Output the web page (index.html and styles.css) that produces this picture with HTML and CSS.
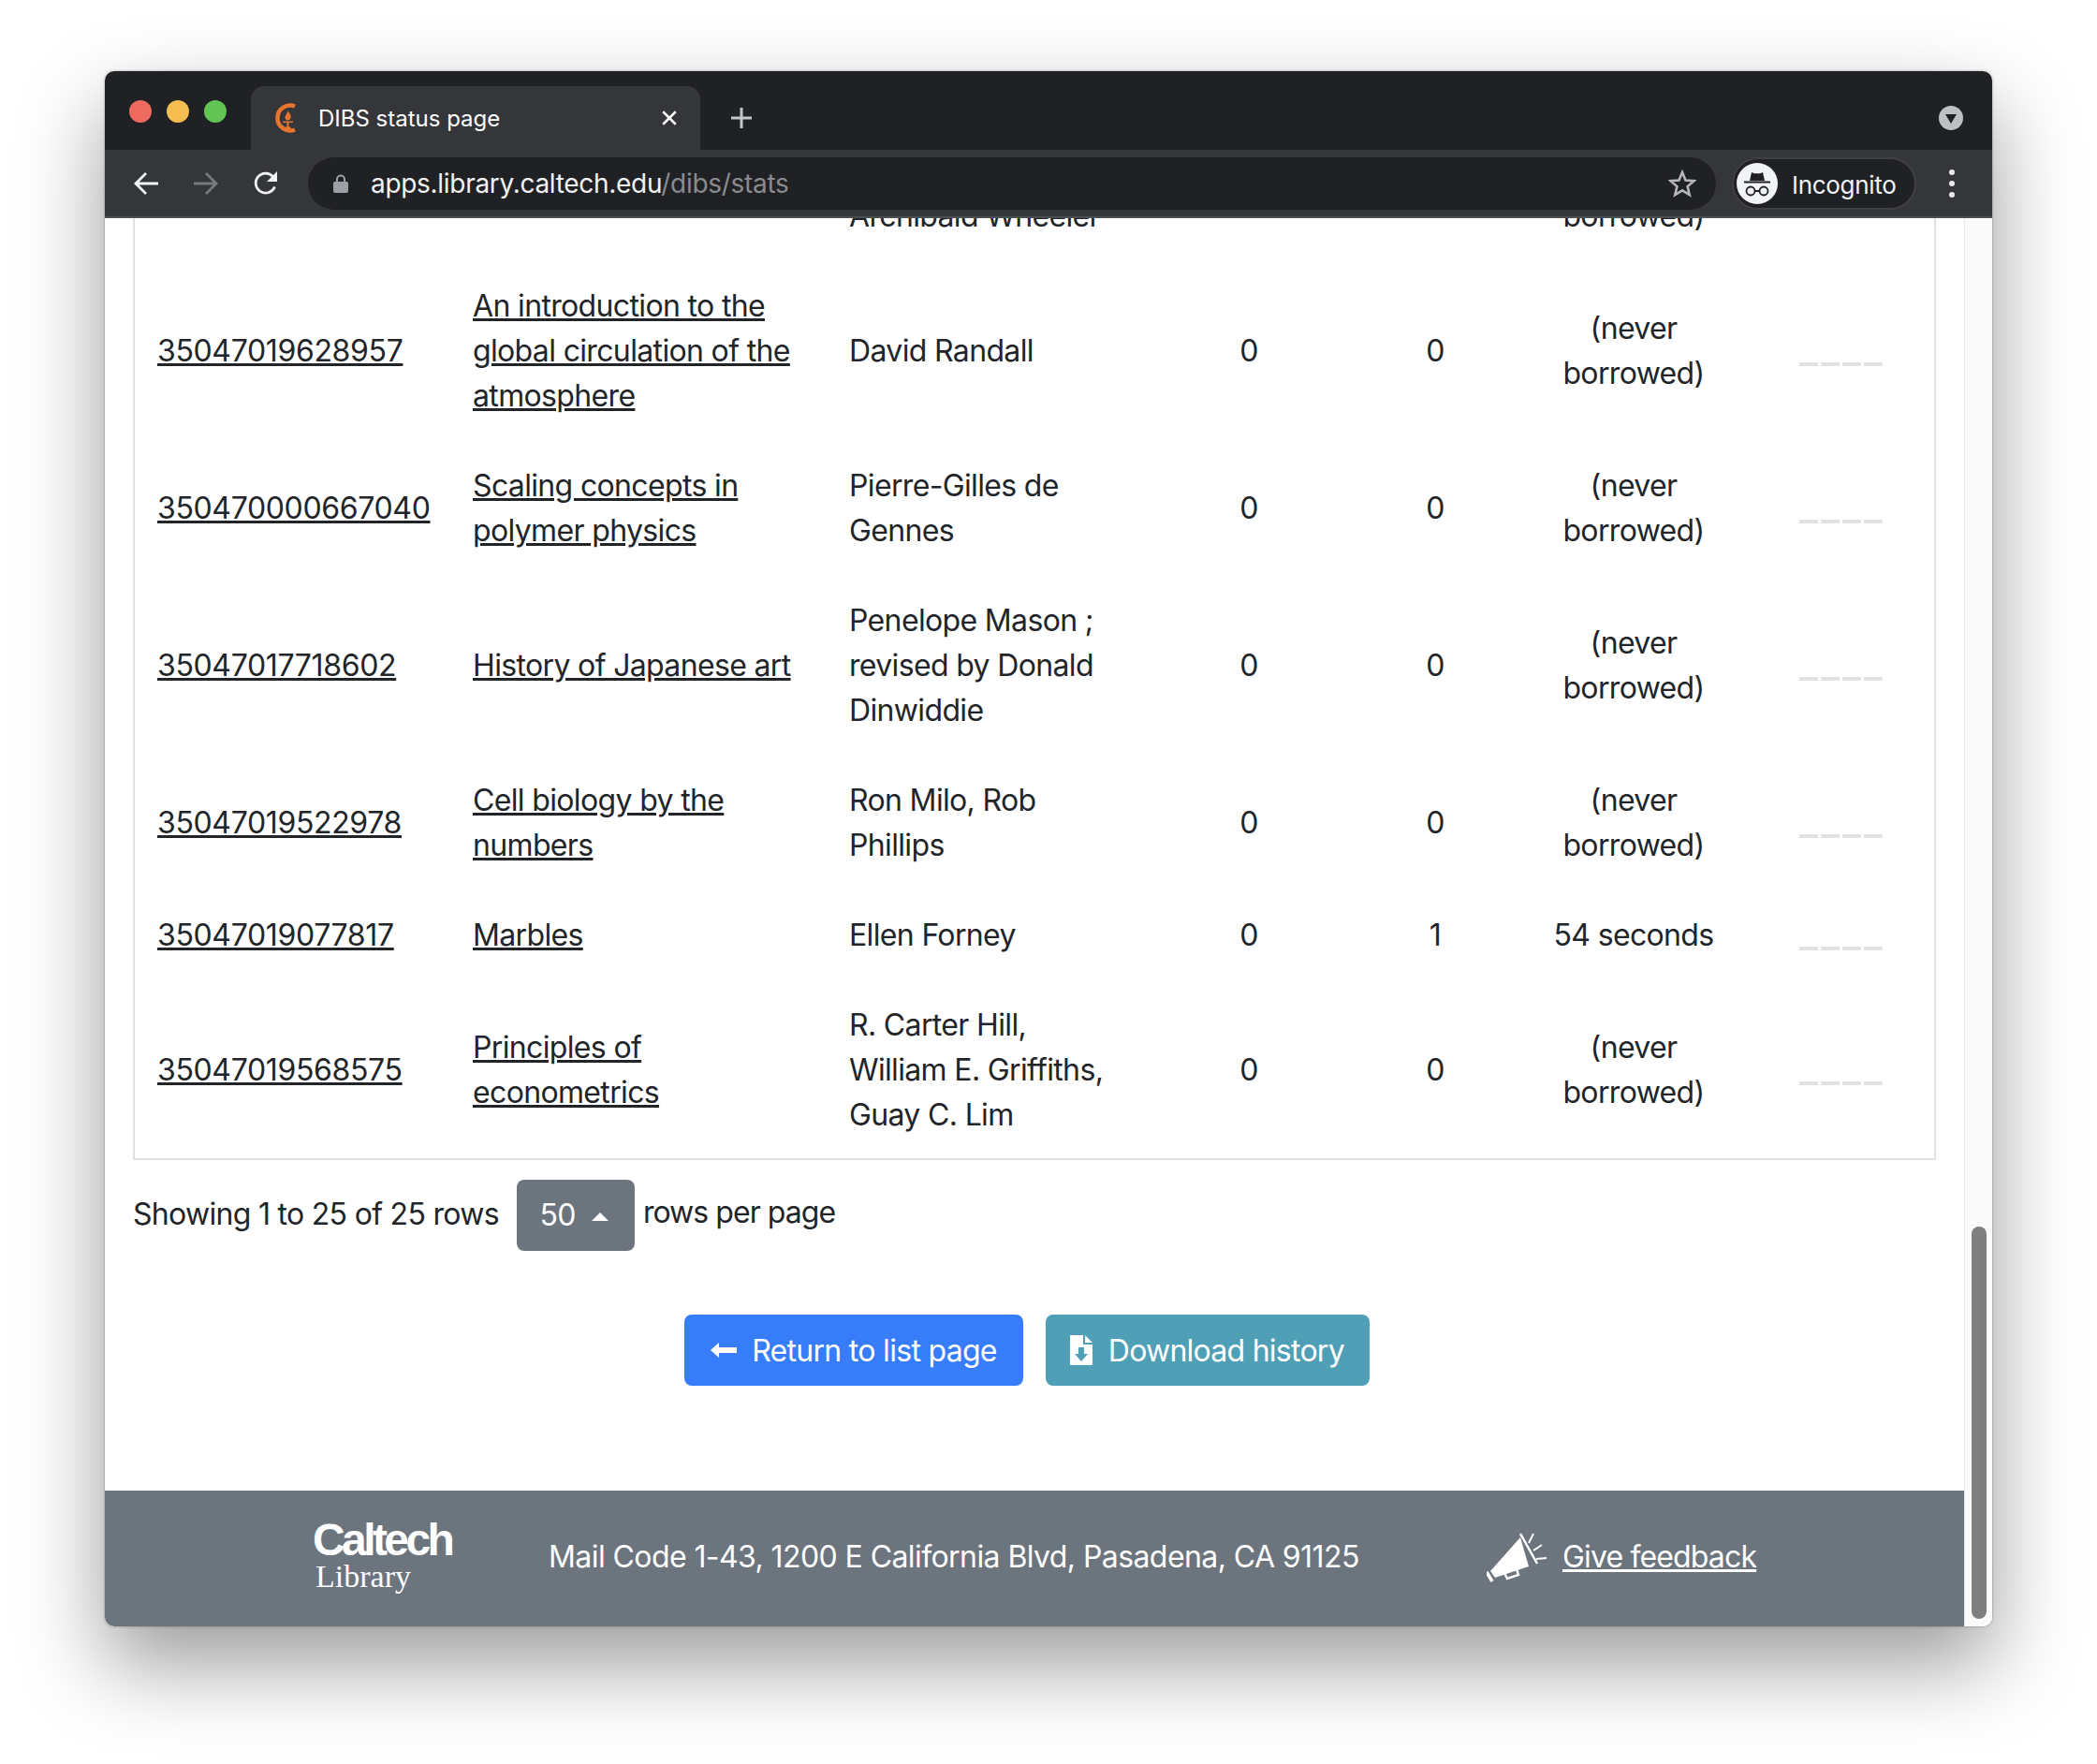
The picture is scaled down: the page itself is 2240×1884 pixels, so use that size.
FILE: index.html
```html
<!DOCTYPE html>
<html lang="en">
<head>
    <meta charset="UTF-8">
    <meta name="viewport" content="width=device-width, initial-scale=1.0">
    <title>DIBS status page</title>
    <link rel="stylesheet" href="styles.css">
</head>
<body>

<div class="window">

    <!-- browser chrome -->
    <div class="tabbar">
        <div class="lights">
            <span class="light red"></span>
            <span class="light yellow"></span>
            <span class="light green"></span>
        </div>
        <div class="tab">
            <svg class="favicon" viewBox="0 0 24 32">
                <path d="M23 3.500A13.500 13.500 0 1 0 23 28.500" fill="none" stroke="#e8752f" stroke-width="4.500"/>
                <path d="M15.500 8c1 3 4 4 3 8-.5 1.500-1.500 2.500-3 2.500s-3-1.200-3-3c0-2 2-3 3-7.500z" fill="#e8752f"/>
                <path d="M10 19.500h11v1.500h-4.500v4.500h2v1.500h-6v-1.500h2V21H10z" fill="#e8752f"/>
            </svg>
            <span class="tab-title">DIBS status page</span>
            <svg class="tab-close" viewBox="0 0 16 16"><path d="M2 2l12 12M14 2L2 14" stroke="#fff" stroke-width="2.200"/></svg>
        </div>
        <svg class="new-tab" viewBox="0 0 24 24"><path d="M12 1v22M1 12h22" stroke="#c4c7c9" stroke-width="3"/></svg>
        <svg class="tab-menu" viewBox="0 0 26 26">
            <circle cx="13" cy="13" r="13" fill="#bdc1c6"/>
            <path d="M7 9h12l-6 10z" fill="#202124"/>
        </svg>
    </div>

    <div class="toolbar">
        <div class="nav">
            <svg class="nav-icon" viewBox="0 0 28 28"><path d="M27 14H3M14 3L3 14l11 11" fill="none" stroke="#f1f3f4" stroke-width="2.800"/></svg>
            <svg class="nav-icon" viewBox="0 0 28 28"><path d="M1 14h24M14 3l11 11-11 11" fill="none" stroke="#77797c" stroke-width="2.800"/></svg>
            <svg class="nav-icon" viewBox="0 0 28 28">
                <path d="M23.500 17.500A10.500 10.500 0 1 1 21.500 6.500" fill="none" stroke="#f1f3f4" stroke-width="2.800"/>
                <path d="M26 1v11H15z" fill="#f1f3f4"/>
            </svg>
        </div>
        <div class="omnibox">
            <svg class="lock" viewBox="0 0 16 20">
                <path d="M4 8V5.500a4 4 0 0 1 8 0V8" fill="none" stroke="#9aa0a6" stroke-width="2"/>
                <rect y="8" width="16" height="12" rx="2" fill="#9aa0a6"/>
            </svg>
            <span class="url">apps.library.caltech.edu<span class="url-path">/dibs/stats</span></span>
            <svg class="star" viewBox="0 0 30 30"><path d="M15 3l3.500 8.500 9 .7-6.900 5.900 2.100 8.900-7.700-4.700-7.700 4.700 2.100-8.900-6.900-5.900 9-.7z" fill="none" stroke="#b5b7b9" stroke-width="2.600"/></svg>
        </div>
        <div class="profile">
            <svg class="profile-icon" viewBox="0 0 44 44">
                <circle cx="22" cy="22" r="22" fill="#f1f3f4"/>
                <path d="M14 19l2-9 3 1.200h6l3-1.200 2 9z" fill="#202124"/>
                <path d="M8 20.500h28" stroke="#202124" stroke-width="2"/>
                <circle cx="15" cy="30" r="4.500" fill="none" stroke="#202124" stroke-width="1.800"/>
                <circle cx="29" cy="30" r="4.500" fill="none" stroke="#202124" stroke-width="1.800"/>
                <path d="M19.500 30h5" stroke="#202124" stroke-width="1.800"/>
            </svg>
            <span class="profile-name">Incognito</span>
        </div>
        <div class="kebab"><span></span><span></span><span></span></div>
    </div>

    <!-- page, scrolled to the bottom -->
    <div class="viewport">
        <div class="page">
            <div class="content">
                <table class="stats">
                    <colgroup>
                        <col class="col-barcode">
                        <col class="col-title">
                        <col class="col-author">
                        <col class="col-count">
                        <col class="col-loans">
                        <col class="col-duration">
                        <col>
                    </colgroup>
                    <tbody>
                        <tr>
                            <td></td>
                            <td></td>
                            <td>Archibald Wheeler</td>
                            <td class="num"></td>
                            <td class="num"></td>
                            <td class="num">borrowed)</td>
                            <td class="spark-cell"></td>
                        </tr>
                        <tr>
                            <td><a class="barcode" href="#">35047019628957</a></td>
                            <td><a href="#">An introduction to the global circulation of the atmosphere</a></td>
                            <td>David Randall</td>
                            <td class="num">0</td>
                            <td class="num">0</td>
                            <td class="num">(never borrowed)</td>
                            <td class="spark-cell"><div class="spark"><i></i><i></i><i></i><i></i></div></td>
                        </tr>
                        <tr>
                            <td><a class="barcode" href="#">350470000667040</a></td>
                            <td><a href="#">Scaling concepts in polymer physics</a></td>
                            <td>Pierre-Gilles de Gennes</td>
                            <td class="num">0</td>
                            <td class="num">0</td>
                            <td class="num">(never borrowed)</td>
                            <td class="spark-cell"><div class="spark"><i></i><i></i><i></i><i></i></div></td>
                        </tr>
                        <tr>
                            <td><a class="barcode" href="#">35047017718602</a></td>
                            <td><a href="#">History of Japanese art</a></td>
                            <td>Penelope Mason ; revised by Donald Dinwiddie</td>
                            <td class="num">0</td>
                            <td class="num">0</td>
                            <td class="num">(never borrowed)</td>
                            <td class="spark-cell"><div class="spark"><i></i><i></i><i></i><i></i></div></td>
                        </tr>
                        <tr>
                            <td><a class="barcode" href="#">35047019522978</a></td>
                            <td><a href="#">Cell biology by the numbers</a></td>
                            <td>Ron Milo, Rob Phillips</td>
                            <td class="num">0</td>
                            <td class="num">0</td>
                            <td class="num">(never borrowed)</td>
                            <td class="spark-cell"><div class="spark"><i></i><i></i><i></i><i></i></div></td>
                        </tr>
                        <tr>
                            <td><a class="barcode" href="#">35047019077817</a></td>
                            <td><a href="#">Marbles</a></td>
                            <td>Ellen Forney</td>
                            <td class="num">0</td>
                            <td class="num">1</td>
                            <td class="num">54 seconds</td>
                            <td class="spark-cell"><div class="spark"><i></i><i></i><i></i><i></i></div></td>
                        </tr>
                        <tr>
                            <td><a class="barcode" href="#">35047019568575</a></td>
                            <td><a href="#">Principles of econometrics</a></td>
                            <td>R. Carter Hill, William E. Griffiths, Guay C. Lim</td>
                            <td class="num">0</td>
                            <td class="num">0</td>
                            <td class="num">(never borrowed)</td>
                            <td class="spark-cell"><div class="spark"><i></i><i></i><i></i><i></i></div></td>
                        </tr>
                    </tbody>
                </table>

                <div class="pager">
                    <span class="pager-info">Showing 1 to 25 of 25 rows</span>
                    <button class="page-size">50 <span class="caret"></span></button>
                    <span class="pager-label">rows per page</span>
                </div>

                <div class="actions">
                    <a class="btn btn-blue" href="#">
                        <svg class="btn-arrow" viewBox="0 0 28 20"><path d="M0 10l9-8v5h19v6H9v5z" fill="#fff"/></svg>
                        Return to list page
                    </a>
                    <a class="btn btn-teal" href="#">
                        <svg class="btn-file" viewBox="0 0 24 32">
                            <path d="M1 0h13v10h10v21a1 1 0 0 1-1 1H1a1 1 0 0 1-1-1V1a1 1 0 0 1 1-1z" fill="#fff"/>
                            <path d="M16 0l8 8h-8z" fill="#fff"/>
                            <path d="M9 13h6v7h4l-7 8-7-8h4z" fill="#4f9fb6"/>
                        </svg>
                        Download history
                    </a>
                </div>
            </div>

            <footer class="footer">
                <div class="logo">
                    <span class="logo-name">Caltech</span>
                    <span class="logo-sub">Library</span>
                </div>
                <span class="address">Mail Code 1-43, 1200 E California Blvd, Pasadena, CA 91125</span>
                <svg class="megaphone" viewBox="0 0 64 54">
                    <path d="M36 6L4 42l5 7 36-12z" fill="#fff"/>
                    <path d="M36 2l18 32" stroke="#fff" stroke-width="2.500"/>
                    <path d="M0 43l6 10" stroke="#fff" stroke-width="3.500"/>
                    <path d="M19 44l3 6 12-4-2-6" fill="none" stroke="#fff" stroke-width="2.500"/>
                    <path d="M45 12l5-10M50 20l9-6M53 29l11-1" stroke="#fff" stroke-width="2"/>
                </svg>
                <a class="feedback" href="#">Give feedback</a>
            </footer>
        </div>

        <div class="scrollbar"><div class="thumb"></div></div>
    </div>
</div>

</body>
</html>
```

FILE: styles.css
```css
* {
    box-sizing: border-box;
}
html, body {
    margin: 0;
    height: 100%;
    background-color: #fff;
}
body {
    padding: 76px 112px 0;
    font-family: Inter, "Liberation Sans", sans-serif;
    color: #212529;
    overflow: hidden;
}
.window {
    width: 2016px;
    height: 1661px;
    display: flex;
    flex-direction: column;
    border-radius: 10px;
    overflow: hidden;
    box-shadow: 0 40px 90px rgba(0, 0, 0, 0.4), 0 0 3px rgba(0, 0, 0, 0.35);
}

/* tab strip */
.tabbar {
    height: 84px;
    flex: none;
    display: flex;
    align-items: flex-end;
    background-color: #202124;
    color: #fff;
}
.lights {
    width: 156px;
    height: 100%;
    display: flex;
    gap: 16px;
    padding: 31px 0 0 26px;
}
.light {
    width: 24px;
    height: 24px;
    border-radius: 50%;
}
.red { background-color: #ee6a5f; }
.yellow { background-color: #f5bd4f; }
.green { background-color: #61c454; }
.tab {
    width: 480px;
    height: 68px;
    display: flex;
    align-items: center;
    padding: 0 24px 0 24px;
    background-color: #35363a;
    border-radius: 14px 14px 0 0;
}
.favicon {
    width: 24px;
    height: 32px;
    flex: none;
}
.tab-title {
    margin-left: 24px;
    font-size: 24px;
    flex: 1;
}
.tab-close {
    width: 18px;
    height: 18px;
}
.new-tab {
    width: 24px;
    height: 24px;
    margin: 0 0 22px 32px;
}
.tab-menu {
    width: 26px;
    height: 26px;
    margin: 0 31px 21px auto;
}

/* toolbar */
.toolbar {
    height: 73px;
    flex: none;
    display: flex;
    align-items: center;
    padding: 1px 0 0 30px;
    background-color: #35363a;
    border-bottom: 2px solid #4c4d51;
}
.nav {
    display: flex;
    gap: 36px;
}
.nav-icon {
    width: 28px;
    height: 28px;
    flex: none;
}
.omnibox {
    width: 1504px;
    height: 56px;
    margin-left: 31px;
    display: flex;
    align-items: center;
    padding: 0 21px 0 27px;
    background-color: #202124;
    border-radius: 28px;
}
.lock {
    width: 16px;
    height: 20px;
}
.url {
    margin-left: 24px;
    font-size: 28px;
    letter-spacing: -0.300px;
    color: #f1f3f4;
    flex: 1;
}
.url-path {
    color: #898b8e;
}
.star {
    width: 30px;
    height: 30px;
}
.profile {
    width: 197px;
    height: 56px;
    margin-left: 17px;
    display: flex;
    align-items: center;
    gap: 15px;
    padding-left: 3px;
    background-color: #202124;
    border: 2px solid #3f4044;
    border-radius: 28px;
    color: #f1f3f4;
    font-size: 26px;
    letter-spacing: -0.300px;
}
.profile-icon {
    width: 44px;
    height: 44px;
}
.profile-name {
    padding-top: 2px;
}
.kebab {
    margin-left: 35px;
    display: flex;
    flex-direction: column;
    gap: 6px;
}
.kebab span {
    width: 6px;
    height: 6px;
    border-radius: 50%;
    background-color: #e8eaed;
}

/* page */
.viewport {
    flex: 1;
    min-height: 0;
    display: flex;
    background-color: #fff;
}
.page {
    flex: 1;
    min-width: 0;
    display: flex;
    flex-direction: column;
    justify-content: flex-end;
    overflow: hidden;
    letter-spacing: -0.700px;
}
.content {
    padding: 0 30px;
}
.stats {
    width: 100%;
    table-layout: fixed;
    border-collapse: collapse;
    border: 2px solid #dee2e6;
    border-top: none;
    font-size: 32px;
    line-height: 48px;
    letter-spacing: -0.650px;
}
.stats td {
    padding: 26px 24px 22px;
    vertical-align: middle;
}
.stats a {
    color: #212529;
}
.stats .barcode {
    letter-spacing: -0.350px;
}
.col-barcode { width: 338px; }
.col-title { width: 402px; }
.col-author { width: 338px; }
.col-count { width: 226px; }
.col-loans { width: 172px; }
.col-duration { width: 252px; }
.num {
    text-align: center;
}
.stats .spark-cell {
    padding: 32px 4px 0 0;
}
.spark {
    display: flex;
    justify-content: center;
    gap: 3px;
}
.spark i {
    width: 20px;
    height: 4px;
    background-color: #e2e2e2;
}

.pager {
    display: flex;
    align-items: flex-start;
    margin-top: 21px;
    font-size: 32px;
    line-height: 48px;
}
.pager-info {
    margin-top: 13px;
}
.page-size {
    width: 126px;
    height: 76px;
    margin-left: 19px;
    padding: 0 3px 0 0;
    border: none;
    border-radius: 8px;
    background-color: #6c757d;
    color: #fff;
    font: inherit;
    letter-spacing: inherit;
}
.caret {
    display: inline-block;
    margin-left: 9px;
    vertical-align: 5px;
    border-left: 9px solid transparent;
    border-right: 9px solid transparent;
    border-bottom: 9px solid #fff;
}
.pager-label {
    margin: 11px 0 0 9px;
    letter-spacing: -0.950px;
}
.actions {
    display: flex;
    justify-content: center;
    gap: 24px;
    margin-top: 68px;
    margin-bottom: 112px;
    padding-right: 16px;
}
.btn {
    height: 76px;
    display: flex;
    align-items: center;
    border-radius: 8px;
    color: #fff;
    font-size: 32px;
    text-decoration: none;
}
.btn-blue {
    background-color: #377dfa;
    padding: 0 28px;
}
.btn-teal {
    background-color: #4f9fb6;
    padding: 0 27px 0 26px;
    letter-spacing: -0.750px;
}
.btn-arrow {
    width: 28px;
    height: 20px;
    margin-right: 16px;
}
.btn-file {
    width: 24px;
    height: 32px;
    margin-right: 17px;
}

/* footer */
.footer {
    height: 145px;
    flex: none;
    display: flex;
    align-items: center;
    padding: 0 0 4px 222px;
    background-color: #6c757d;
    color: #fff;
    font-size: 32px;
}
.logo {
    width: 252px;
    display: flex;
    flex-direction: column;
}
.logo-name {
    font-family: "Liberation Sans", sans-serif;
    font-size: 48px;
    font-weight: 700;
    line-height: 42px;
    letter-spacing: -3.600px;
}
.logo-sub {
    margin-left: 3px;
    font-family: "Liberation Serif", serif;
    font-size: 34px;
    line-height: 36px;
    letter-spacing: 0;
}
.address {
    width: 1002px;
    letter-spacing: -0.580px;
}
.megaphone {
    width: 64px;
    height: 54px;
}
.feedback {
    margin-left: 17px;
    color: #fff;
    letter-spacing: -0.850px;
}

/* scrollbar */
.scrollbar {
    width: 30px;
    flex: none;
    padding: 1077px 6px 8px 7px;
    background-color: #fafafa;
    border-left: 1px solid #e8e8e8;
}
.thumb {
    height: 100%;
    border-radius: 8px;
    background-color: #7f7f7f;
}
```
